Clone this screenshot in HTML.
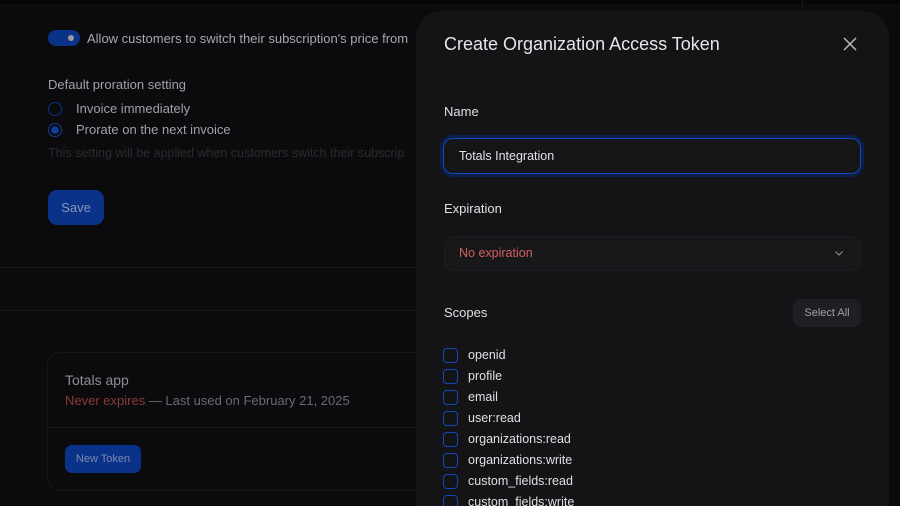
<!DOCTYPE html>
<html style="width:900px;height:506px;overflow:hidden"><head><style>
*{margin:0;padding:0;box-sizing:border-box}
body{width:900px;height:506px;overflow:hidden;background:#0b0b0d;font-family:"Liberation Sans",sans-serif;position:relative;color:#ccc}
.a{position:absolute;white-space:nowrap}
</style></head><body>
<div class="a" style="left:0;top:0;width:900px;height:4px;background:#050506"></div>
<div class="a" style="left:48px;top:30px;width:32px;height:16px;border-radius:8px;background:#0a3288"></div>
<div class="a" style="left:68px;top:35px;width:6px;height:6px;border-radius:50%;background:#9a9aa0"></div>
<div class="a" style="left:87px;top:31px;font-size:13px;color:#a8a8ae">Allow customers to switch their subscription's price from</div>
<div class="a" style="left:48px;top:77px;font-size:13px;color:#a0a0a6">Default proration setting</div>
<div class="a" style="left:48px;top:102px;width:14px;height:14px;border-radius:50%;border:1.5px solid #0a3288"></div>
<div class="a" style="left:76px;top:101px;font-size:13px;color:#a0a0a6">Invoice immediately</div>
<div class="a" style="left:48px;top:123px;width:14px;height:14px;border-radius:50%;border:1.5px solid #123c9a;background:radial-gradient(circle,#123c9a 3.5px,#0b0b0d 4px)"></div>
<div class="a" style="left:76px;top:122px;font-size:13px;color:#a0a0a6">Prorate on the next invoice</div>
<div class="a" style="left:48px;top:146px;font-size:12.5px;color:#2c2c30">This setting will be applied when customers switch their subscrip</div>
<div class="a" style="left:48px;top:190px;width:56px;height:35px;border-radius:9px;background:#0a3288;color:#8b95b8;font-size:13px;text-align:center;line-height:35px">Save</div>
<div class="a" style="left:0;top:267px;width:420px;height:1px;background:#17171a"></div>
<div class="a" style="left:0;top:310px;width:420px;height:1px;background:#17171a"></div>
<div class="a" style="left:47px;top:352px;width:420px;height:139px;border:1px solid #17171a;border-radius:14px"></div>
<div class="a" style="left:48px;top:427px;width:380px;height:1px;background:#17171a"></div>
<div class="a" style="left:65px;top:372px;font-size:14px;color:#8e8e94">Totals app</div>
<div class="a" style="left:65px;top:393px;font-size:13px;color:#6a6a70"><span style="color:#8a3a38">Never expires</span> — Last used on February 21, 2025</div>
<div class="a" style="left:65px;top:445px;width:76px;height:28px;border-radius:7px;background:#0a3288;color:#7d88ad;font-size:11px;text-align:center;line-height:28px">New Token</div>
<div class="a" style="left:802px;top:0;width:1px;height:11px;background:#1a1a1d"></div>
<div class="a" style="left:416px;top:11px;width:473px;height:495px;background:#141416;border-radius:26px 26px 0 0"></div>
<div class="a" style="left:444px;top:34px;font-size:18px;color:#e6e6ea">Create Organization Access Token</div>
<svg class="a" style="left:843px;top:37px" width="14" height="14" viewBox="0 0 14 14"><path d="M1 1L13 13M13 1L1 13" stroke="#bbb" stroke-width="1.5"/></svg>
<div class="a" style="left:444px;top:104px;font-size:13px;color:#e0e0e4">Name</div>
<div class="a" style="left:443px;top:138px;width:418px;height:36px;border-radius:10px;border:1.5px solid #1248bb;box-shadow:0 0 0 3px #0b1f4a;background:#151518"></div>
<div class="a" style="left:459px;top:149px;font-size:12.5px;color:#e2e2e6">Totals Integration</div>
<div class="a" style="left:444px;top:201px;font-size:13px;color:#e0e0e4">Expiration</div>
<div class="a" style="left:444px;top:236px;width:417px;height:35px;border-radius:10px;border:1px solid #1e1e22;background:#18181b"></div>
<div class="a" style="left:459px;top:246px;font-size:12.5px;color:#d06060">No expiration</div>
<svg class="a" style="left:834px;top:249px" width="10" height="8" viewBox="0 0 10 8"><path d="M1.5 2.5L5 6 8.5 2.5" stroke="#888" stroke-width="1.2" fill="none"/></svg>
<div class="a" style="left:444px;top:305px;font-size:13px;color:#e0e0e4">Scopes</div>
<div class="a" style="left:793px;top:299px;width:68px;height:28px;border-radius:8px;background:#1f1f23;color:#a0a0a6;font-size:11px;text-align:center;line-height:28px">Select All</div>
<div class="a" style="left:443px;top:345px;font-size:12.5px;color:#e0e0e4;line-height:21px">
<div style="position:relative;padding-left:25px"><span style="position:absolute;left:0;top:3px;width:15px;height:15px;border:1.5px solid #1248bb;border-radius:4px"></span>openid</div>
<div style="position:relative;padding-left:25px"><span style="position:absolute;left:0;top:3px;width:15px;height:15px;border:1.5px solid #1248bb;border-radius:4px"></span>profile</div>
<div style="position:relative;padding-left:25px"><span style="position:absolute;left:0;top:3px;width:15px;height:15px;border:1.5px solid #1248bb;border-radius:4px"></span>email</div>
<div style="position:relative;padding-left:25px"><span style="position:absolute;left:0;top:3px;width:15px;height:15px;border:1.5px solid #1248bb;border-radius:4px"></span>user:read</div>
<div style="position:relative;padding-left:25px"><span style="position:absolute;left:0;top:3px;width:15px;height:15px;border:1.5px solid #1248bb;border-radius:4px"></span>organizations:read</div>
<div style="position:relative;padding-left:25px"><span style="position:absolute;left:0;top:3px;width:15px;height:15px;border:1.5px solid #1248bb;border-radius:4px"></span>organizations:write</div>
<div style="position:relative;padding-left:25px"><span style="position:absolute;left:0;top:3px;width:15px;height:15px;border:1.5px solid #1248bb;border-radius:4px"></span>custom_fields:read</div>
<div style="position:relative;padding-left:25px"><span style="position:absolute;left:0;top:3px;width:15px;height:15px;border:1.5px solid #1248bb;border-radius:4px"></span>custom_fields:write</div>
</div>
</body></html>
